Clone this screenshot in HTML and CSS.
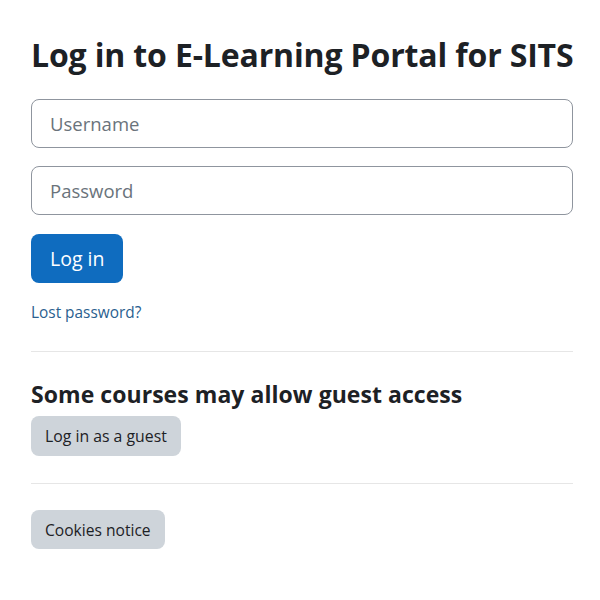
FILE: index.html
```html
<!DOCTYPE html>
<html>
<head>
<meta charset="utf-8">
<link rel="stylesheet" href="styles.css">
</head>
<body>
<main class="login">
  <h1 class="title">Log in to E-Learning Portal for SITS</h1>
  <form class="form">
    <input class="field" type="text" placeholder="Username">
    <input class="field" type="password" placeholder="Password">
    <button class="btn btn-primary" type="button">Log in</button>
  </form>
  <a class="lost" href="#">Lost password?</a>
  <hr class="divider">
  <h2 class="subtitle">Some courses may allow guest access</h2>
  <button class="btn btn-secondary" type="button">Log in as a guest</button>
  <hr class="divider divider-2">
  <button class="btn btn-secondary btn-cookies" type="button">Cookies notice</button>
</main>
</body>
</html>
```
FILE: styles.css
```css
* { box-sizing: border-box; }
html, body { margin: 0; padding: 0; background: #fff; }
body { font-family: "Open Sans", "Noto Sans", sans-serif; color: #1d2125; }
.login {
  width: 542px;
  margin-left: 31px;
  padding-top: 34px;
  display: flex;
  flex-direction: column;
  align-items: flex-start;
}
.title {
  margin: 0 0 23px;
  font-size: 32px;
  font-weight: 700;
  line-height: 42px;
  letter-spacing: -0.15px;
  white-space: nowrap;
}
.form {
  width: 100%;
  display: flex;
  flex-direction: column;
  align-items: flex-start;
  gap: 18px;
}
.field {
  width: 100%;
  height: 49px;
  border: 1px solid #8f959e;
  border-radius: 8px;
  padding: 0 18px;
  font-family: inherit;
  font-size: 18.5px;
  color: #495057;
  background: #fff;
}
.field::placeholder { color: #6a737b; }
.btn {
  border: 0;
  border-radius: 8px;
  font-family: inherit;
  cursor: pointer;
}
.btn-primary {
  margin-top: 1px;
  height: 49px;
  padding: 0 19px;
  background: #0f6cbf;
  color: #fff;
  font-size: 19.5px;
}
.lost {
  margin-top: 19px;
  font-size: 15.4px;
  line-height: 21px;
  color: #2b5f8f;
  text-decoration: none;
}
.divider {
  width: 100%;
  margin: 28px 0 0;
  border: 0;
  border-top: 1px solid #e6e6e6;
}
.subtitle {
  margin: 26px 0 6px;
  font-size: 23px;
  font-weight: 700;
  line-height: 32px;
  letter-spacing: 0.05px;
  white-space: nowrap;
}
.btn-secondary {
  height: 40px;
  padding: 0 14px;
  background: #ced4da;
  color: #1d2125;
  font-size: 15.8px;
}
.btn-cookies { height: 39px; padding: 0 14px; font-size: 15.6px; }
.divider-2 { margin-top: 27px; margin-bottom: 26px; }
```
